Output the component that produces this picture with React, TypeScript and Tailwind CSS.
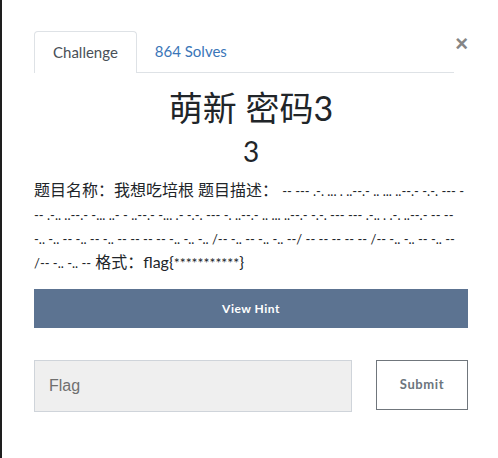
function Morse({ children }: { children: string }) {
  return <span className="text-[13px] leading-none">{children}</span>;
}

export default function App() {
  return (
    <div className="w-[498px] h-[458px] bg-white flex overflow-hidden font-['Lato','Noto_Sans_CJK_SC',sans-serif]">
      <div className="w-[2px] bg-[#1e1e1e] shrink-0" />
      <div className="flex-1 min-w-0 pl-[32px] pr-[30px] pt-[31px]">
        {/* tabs + close */}
        <div className="flex items-start">
          <div className="flex-1 flex border-b border-[#dee2e6] h-[42px]">
            <div className="h-[42px] px-[18px] border border-b-0 border-[#dee2e6] rounded-t-[4px] bg-white flex items-center text-[15px] text-[#495057] -mb-px">
              Challenge
            </div>
            <div className="h-[41px] px-[18px] flex items-center text-[15px] text-[#3a76b8]">
              864 Solves
            </div>
          </div>
          <button className="w-[14px] mt-[2px] text-[22px] leading-[22px] font-bold text-[#858585] text-right font-['Liberation_Sans',sans-serif]">
            ×
          </button>
        </div>

        {/* title */}
        <h1 className="mt-[15px] text-center text-[34px] leading-[40px] text-[#212529]">萌新 密码3</h1>
        <h2 className="mt-[6px] text-center text-[28px] leading-[34px] text-[#212529]">3</h2>

        {/* description */}
        <div className="mt-[10px] text-[16px] text-[#212529] whitespace-nowrap">
          <div className="h-[24px] leading-[24px]">
            题目名称：我想吃培根 题目描述： <Morse>-- --- .-. ... . ..--.- .. ... ..--.- -.-. --- -</Morse>
          </div>
          <div className="h-[24px] leading-[24px]">
            <Morse>-- .-.. ..--.- -... ..- - ..--.- -... .- -.-. --- -. ..--.- .. ... ..--.- -.-. --- --- .-.. . .-. ..--.- -- --</Morse>
          </div>
          <div className="h-[24px] leading-[24px]">
            <Morse>-.. -.. -- -.. -- -.. -- -- -- -- -.. -.. -.. /-- -.. -- -.. -.. --/ -- -- -- -- -- /-- -.. -.. -- -.. --</Morse>
          </div>
          <div className="h-[24px] leading-[24px]">
            <Morse>/-- -.. -.. --</Morse> 格式：flag{'{'}
            <span className="text-[14px] leading-none">***********</span>
            {'}'}
          </div>
        </div>

        {/* hint */}
        <button className="mt-[15px] w-full h-[39px] bg-[#5c7391] text-white text-[12px] font-bold tracking-[0.5px]">
          View Hint
        </button>

        {/* flag form */}
        <div className="mt-[32px] flex items-start justify-between">
          <input
            placeholder="Flag"
            className="w-[318px] h-[52px] bg-[#efefef] border border-[#cfd4da] px-[14px] text-[16px] font-['Liberation_Sans',sans-serif] placeholder:text-[#6f6f6f] outline-none"
          />
          <button className="w-[92px] h-[50px] border border-[#70767c] text-[#6c757d] text-[13px] font-bold tracking-[0.6px] bg-white">
            Submit
          </button>
        </div>
      </div>
    </div>
  );
}
